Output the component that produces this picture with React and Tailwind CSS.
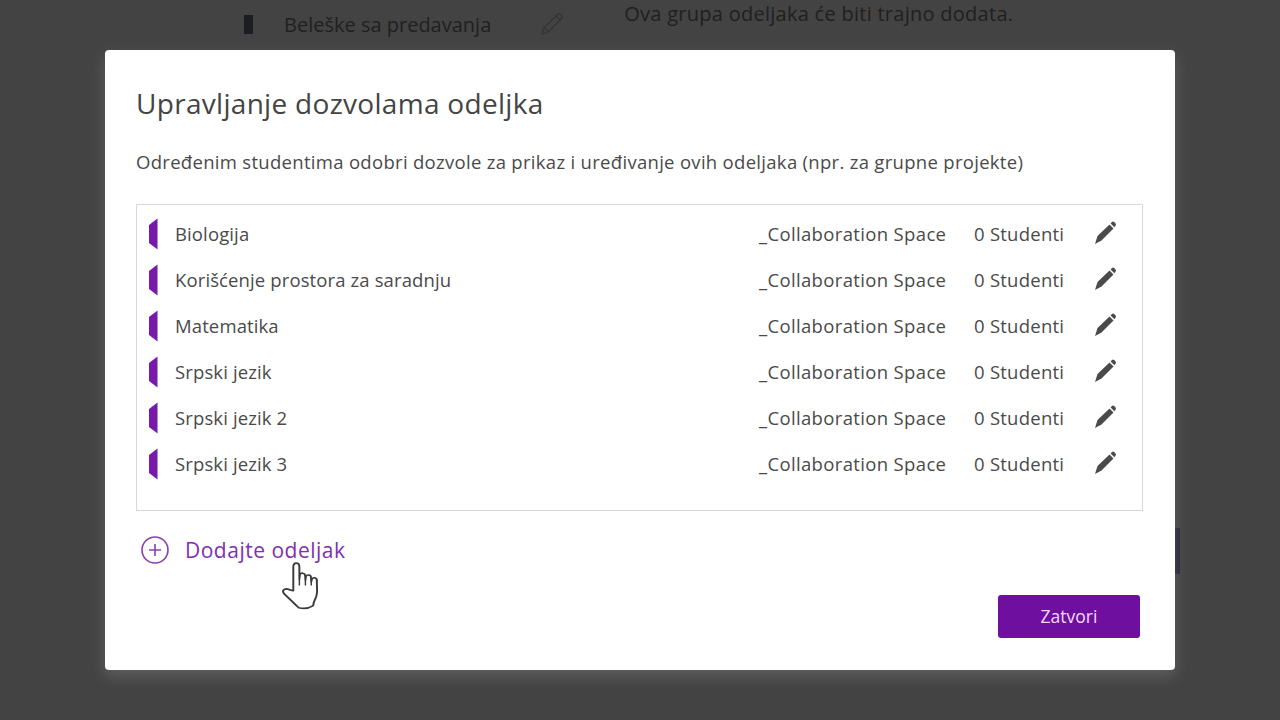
import React from 'react';

const sections = ['Biologija', 'Korišćenje prostora za saradnju', 'Matematika', 'Srpski jezik', 'Srpski jezik 2', 'Srpski jezik 3'];

function SectionTab() {
  return (
    <svg width="10" height="32" viewBox="0 0 10 32" className="shrink-0">
      <path d="M9.5 0.5V31.5L1 25V7Z" fill="#7719aa" />
    </svg>
  );
}

function Pencil({ color = '#4a4a4a' }) {
  return (
    <svg width="26" height="26" viewBox="0 0 26 26" className="shrink-0">
      <path d="M3 24 L5.5 16 L17.5 4.5 L21.5 8.5 L9.5 20.5 Z" fill={color} />
      <path d="M18.6 3.4 L20 2 Q21 1.2 22.2 2 L23.6 3.4 Q24.4 4.6 23.6 5.6 L22.4 7.3 Z" fill={color} />
    </svg>
  );
}

function HandCursor() {
  return (
    <svg width="46" height="51" viewBox="0 0 38 48" preserveAspectRatio="none">
      <path
        d="M11 28 L11 5.5 Q11 2 13.5 2 Q16 2 16 5.5 L16 17 L16.4 13 Q17 11.3 18.8 11.5 Q20.8 11.8 20.8 14 L21 18 L21.4 14.6 Q22 13 23.8 13.2 Q25.6 13.5 25.6 15.5 L25.8 19.5 L26.4 17 Q27 15.6 28.6 15.8 Q30.4 16.2 30.4 18 L30.6 26 Q31 32 28.6 37 Q27.6 39.5 27.4 42 Q22 46 15.5 44 Q13 41.5 10 38 L3.5 31 Q1.5 28.5 3.5 26.8 Q5.5 25.5 7.5 27 Z"
        fill="#fff"
        stroke="#3a3a3a"
        strokeWidth="1.6"
        strokeLinejoin="round"
      />
      <path d="M16 17V23M21 18V23M25.8 19.5V23" fill="none" stroke="#3a3a3a" strokeWidth="1.2" />
    </svg>
  );
}

export default function App() {
  return (
    <div className="relative h-[720px] w-[1280px] overflow-hidden bg-[#434343] font-['Open_Sans','Noto_Sans',sans-serif]">
      {/* page behind the dialog */}
      <div className="flex items-start pl-[244px] text-[#202020]">
        <div className="mt-[15px] h-[19px] w-[9px] bg-[#1c1c24]" />
        <div className="ml-[31px] mt-[12px] text-[20px] leading-[26px]">Beleške sa predavanja</div>
        <div className="ml-[49px] mt-[12px] opacity-60">
          <svg width="24" height="24" viewBox="0 0 24 24" fill="none" stroke="#2a2a2a" strokeWidth="1.3">
            <path d="M2 22 L4 15.5 L17.5 2.5 Q19 1.5 20.5 2.5 L21.5 3.5 Q22.5 5 21.5 6.5 L8.5 20 Z M4 15.5 L8.5 20 M16 4 L20 8" />
          </svg>
        </div>
        <div className="ml-[60px] mt-[1px] text-[20px] leading-[26px] tracking-[0.27px]">Ova grupa odeljaka će biti trajno dodata.</div>
      </div>

      {/* scrollbar peeking out behind the dialog */}
      <div className="absolute left-[1175px] top-[528px] h-[46px] w-[5px] bg-[#2c2a3a]" />

      {/* dialog */}
      <div className="absolute left-[105px] top-[50px] flex h-[620px] w-[1070px] flex-col rounded-[4px] bg-white pl-[31px] pr-[32px] shadow-[0_6px_16px_rgba(255,255,255,0.16)]">
        <h1 className="mt-[33px] text-[28px] leading-[40px] tracking-[0.3px] text-[#444444]">Upravljanje dozvolama odeljka</h1>
        <p className="mt-[26px] text-[18.5px] leading-[26px] tracking-[0.3px] text-[#4a4a4a]">
          Određenim studentima odobri dozvole za prikaz i uređivanje ovih odeljaka (npr. za grupne projekte)
        </p>
        <div className="mt-[29px] flex h-[307px] flex-col border border-[#d8d8d8] pt-[6px]">
          {sections.map((name) => (
            <div key={name} className="flex h-[46px] items-center text-[18.5px] text-[#4a4a4a]">
              <div className="ml-[11px] mr-[17px] flex">
                <SectionTab />
              </div>
              <span className="flex-1 tracking-[0.12px]">{name}</span>
              <span className="w-[215px] tracking-[0.35px]">_Collaboration Space</span>
              <span className="w-[118px] tracking-[0.25px]">0 Studenti</span>
              <div className="mr-[24px] -mt-[2px]">
                <Pencil />
              </div>
            </div>
          ))}
        </div>
        <div className="relative mt-[22px] flex items-center text-[#7f2fae]">
          <svg width="30" height="30" viewBox="0 0 30 30" fill="none" stroke="#8a3fb5" strokeWidth="1.6" className="ml-[4px]">
            <circle cx="15" cy="15" r="13" />
            <path d="M15 9V21M9 15H21" />
          </svg>
          <span className="ml-[15px] text-[21px] leading-[34px] tracking-[0.5px]">Dodajte odeljak</span>
          <div className="absolute left-[144px] top-[28px]">
            <HandCursor />
          </div>
        </div>
        <div className="mr-[3px] mt-[28px] flex justify-end">
          <button className="h-[43px] w-[142px] rounded-[3px] bg-[#6f0f9f] text-[17.5px] text-[#f3d9fb]">Zatvori</button>
        </div>
      </div>
    </div>
  );
}
